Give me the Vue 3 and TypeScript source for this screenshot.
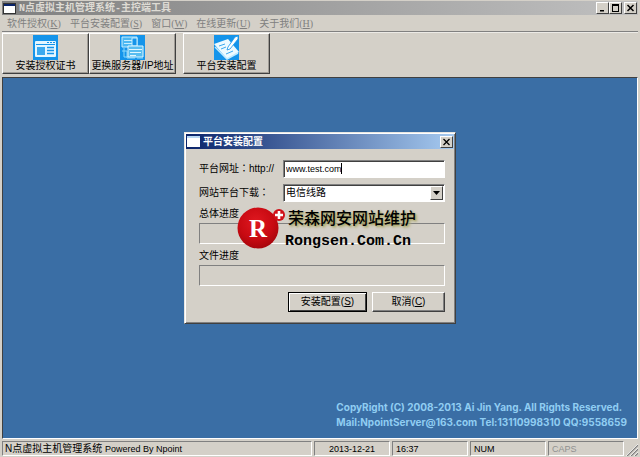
<script setup lang="ts">
import { ref } from 'vue'

interface MenuEntry {
  label: string
  key: string
}

const menus: MenuEntry[] = [
  { label: '软件授权', key: 'K' },
  { label: '平台安装配置', key: 'S' },
  { label: '窗口', key: 'W' },
  { label: '在线更新', key: 'U' },
  { label: '关于我们', key: 'H' },
]

const address = ref('www.test.com')
const line = ref('电信线路')
const focused = ref(false)
</script>

<template>
  <div class="window">
    <header class="title main-title">
      <svg class="app-icon" viewBox="0 0 13 11" aria-hidden="true">
        <rect x="0.5" y="0.5" width="12" height="10" fill="#fff" stroke="#333" />
        <rect x="1" y="1" width="11" height="2" fill="#0a246a" />
      </svg>
      <h1>N点虚拟主机管理系统-主控端工具</h1>
      <div class="captions">
        <button class="caption" aria-label="最小化">
          <svg viewBox="0 0 9 8"><path d="M2 6h4v1.5H2z" /></svg>
        </button>
        <button class="caption" aria-label="最大化">
          <svg viewBox="0 0 9 8"><path fill-rule="evenodd" d="M1 0h7v8H1zM2 2v5h5V2z" /></svg>
        </button>
        <button class="caption close" aria-label="关闭">
          <svg viewBox="0 0 9 8"><path d="M1.5 1l6 6M7.5 1l-6 6" stroke="#000" stroke-width="1.5" /></svg>
        </button>
      </div>
    </header>

    <nav class="menubar">
      <button v-for="m in menus" :key="m.key" class="menu">{{ m.label }}(<u>{{ m.key }}</u>)</button>
    </nav>

    <div class="toolbar">
      <button class="tool">
        <svg viewBox="0 0 25 25" aria-hidden="true">
          <rect width="25" height="25" fill="#1594ea" />
          <rect x="2" y="6" width="21" height="16" rx="1" fill="#e4f6ff" />
          <path d="M3 9.5h19" stroke="#1594ea" />
          <path d="M14 7.5h2M17 7.5h2M20 7.5h2" stroke="#1594ea" />
          <rect x="4" y="12" width="8" height="8" fill="#3ba9ef" />
          <path d="M14 12.5h7M14 15.5h7M14 18.5h7" stroke="#1594ea" stroke-width="1.5" />
        </svg>
        <span>安装授权证书</span>
      </button>
      <button class="tool">
        <svg viewBox="0 0 25 25" aria-hidden="true">
          <rect width="25" height="25" fill="#1594ea" />
          <path d="M2 2h15v10H2z" fill="#4db8f2" stroke="#c8efff" />
          <path d="M4 5.5h11M4 8.5h8" stroke="#c8efff" />
          <path d="M4 13v9h4M2 16h5v7h8" fill="none" stroke="#8ad9fb" />
          <path d="M12 3h5v8h-5z" fill="#1594ea" stroke="#c8efff" />
          <path d="M8 11h15v11H8z" fill="#58bdf0" stroke="#dff6ff" />
          <path d="M9 14.5h13M10 17.5h11M10 20.5h6" stroke="#dff6ff" />
          <path d="M17 23h6" stroke="#8ad9fb" />
        </svg>
        <span>更换服务器/IP地址</span>
      </button>
      <button class="tool apart">
        <svg viewBox="0 0 25 25" aria-hidden="true">
          <rect width="25" height="25" fill="#1594ea" />
          <path d="M0 9l14-5 11 13-12 7z" fill="#eefaff" />
          <path d="M1 12l12 12 11-6" fill="none" stroke="#c1eaff" stroke-width="1.5" />
          <path d="M5 11l6-2M7 14l5-2M12 19l7-3" stroke="#3ba9ef" />
          <path d="M24 1l-3 1-7 10-1 3 3-1 8-10z" fill="#fff" stroke="#1594ea" stroke-width="0.8" />
        </svg>
        <span>平台安装配置</span>
      </button>
    </div>

    <main class="client">
      <p class="copyright">
        CopyRight (C) 2008-2013 Ai Jin Yang. All Rights Reserved.<br />
        Mail:NpointServer@163.com Tel:13110998310 QQ:9558659
      </p>
    </main>

    <footer class="status">
      <span class="pane product">N点虚拟主机管理系统 <small>Powered By Npoint</small></span>
      <span class="pane date">2013-12-21</span>
      <span class="pane">16:37</span>
      <span class="pane">NUM</span>
      <span class="pane off">CAPS</span>
      <svg class="grip" viewBox="0 0 12 12" aria-hidden="true">
        <path d="M1 12L12 1M5 12l7-7M9 12l3-3" stroke="#808080" stroke-width="1.3" />
        <path d="M0 12L12 0M4 12l8-8M8 12l4-4" stroke="#fff" stroke-width="0.7" />
      </svg>
    </footer>

    <div class="layer">
      <section class="dialog" role="dialog" aria-labelledby="dialog-title">
        <header class="title dialog-title">
          <svg class="app-icon" viewBox="0 0 13 11" aria-hidden="true">
            <rect width="13" height="11" fill="#fff" />
            <rect width="13" height="2" fill="#b8d8f4" />
          </svg>
          <h2 id="dialog-title">平台安装配置</h2>
          <button class="caption" aria-label="关闭">
            <svg viewBox="0 0 9 8"><path d="M1.5 1l6 6M7.5 1l-6 6" stroke="#000" stroke-width="1.3" /></svg>
          </button>
        </header>

        <form class="form" @submit.prevent>
          <div class="row">
            <label for="address">平台网址<span class="colon">：</span>http://</label>
            <div class="field">
              <input id="address" v-model="address" type="text" @focus="focused = true" @blur="focused = false" />
              <i v-if="!focused" class="caret"></i>
            </div>
          </div>
          <div class="row">
            <label for="line">网站平台下载<span class="colon">：</span></label>
            <div class="field">
              <select id="line" v-model="line">
                <option>电信线路</option>
              </select>
              <span class="drop" aria-hidden="true">
                <svg viewBox="0 0 7 4"><path d="M0 0h7L3.5 4z" /></svg>
              </span>
            </div>
          </div>
          <div class="meter">
            <label for="total">总体进度</label>
            <progress id="total" value="0" max="100"></progress>
          </div>
          <div class="meter">
            <label for="file">文件进度</label>
            <progress id="file" value="0" max="100"></progress>
          </div>
          <div class="actions">
            <button class="push primary" type="submit">安装配置(<u>S</u>)</button>
            <button class="push" type="button">取消(<u>C</u>)</button>
          </div>
        </form>

        <div class="watermark">
          <svg viewBox="0 0 50 44" aria-hidden="true">
            <defs>
              <radialGradient id="ball" cx="45%" cy="35%" r="65%">
                <stop offset="0" stop-color="#e01820" />
                <stop offset="0.65" stop-color="#c80a12" />
                <stop offset="1" stop-color="#a8060c" />
              </radialGradient>
            </defs>
            <circle cx="21" cy="22" r="20.5" fill="url(#ball)" />
            <circle cx="42" cy="9" r="6" fill="#d01018" />
            <path d="M42 5v8M38 9h8" stroke="#fff" stroke-width="2.6" />
            <text x="21" y="31" text-anchor="middle" class="initial">R</text>
          </svg>
          <div class="brand">
            <strong class="brand-name">荣森网安网站维护</strong>
            <strong class="brand-site">Rongsen.Com.Cn</strong>
          </div>
        </div>
      </section>
    </div>
  </div>
</template>

<style>
body {
  margin: 0;
}
</style>

<style scoped>
* {
  box-sizing: border-box;
}
.window {
  position: relative;
  display: flex;
  flex-direction: column;
  min-height: 100vh;
  padding: 1px 2px;
  background: #d4d0c8;
  color: #000;
  font: 10px/12px "Liberation Sans", "Noto Sans CJK SC", sans-serif;
}
button,
input,
select {
  margin: 0;
  padding: 0;
  border-radius: 0;
  font: inherit;
  color: inherit;
}
.title {
  display: flex;
  align-items: center;
  gap: 3px;
  height: 14px;
  padding: 0 1px;
}
.main-title {
  background: linear-gradient(90deg, #808080, #c0c0c0);
  color: #dedbd4;
}
.dialog-title {
  height: 15px;
  background: linear-gradient(90deg, #0a246a, #a6caf0);
  color: #fff;
}
.title h1,
.title h2 {
  flex: 1;
  margin: 0;
  font-size: 10px;
  line-height: 14px;
  font-weight: bold;
  white-space: nowrap;
}
.title h1 {
  padding-top: 1px;
  font-family: "Liberation Mono", "Noto Sans CJK SC", monospace;
}
.app-icon {
  width: 13px;
  height: 11px;
}
.captions {
  display: flex;
}
.caption {
  display: grid;
  place-items: center;
  width: 13px;
  height: 12px;
  background: #d4d0c8;
  border: 1px solid;
  border-color: #fff #404040 #404040 #fff;
}
.caption svg {
  width: 9px;
  height: 8px;
}
.close {
  margin-left: 2px;
}
.menubar {
  display: flex;
  gap: 9px;
  height: 17px;
  padding: 1px 5px 0;
  border-bottom: 1px solid #808080;
}
.menu {
  border: 0;
  background: none;
  color: #808080;
  font-family: "Liberation Serif", "Noto Sans CJK SC", serif;
  white-space: nowrap;
}
.toolbar {
  display: flex;
  height: 45px;
  border-top: 1px solid #eceae6;
  align-items: flex-start;
}
.tool {
  display: flex;
  flex-direction: column;
  align-items: center;
  width: 87px;
  height: 41px;
  padding-top: 1px;
  background: #d4d0c8;
  border: 1px solid;
  border-color: #fff #404040 #404040 #fff;
  box-shadow: inset -1px -1px #a09c96;
  white-space: nowrap;
}
.tool svg {
  width: 25px;
  height: 25px;
}
.apart {
  margin-left: 7px;
}
.client {
  flex: 1;
  display: flex;
  justify-content: flex-end;
  align-items: flex-end;
  padding: 8px 10px;
  background: #3a6ea5;
  border: 1px solid;
  border-color: #404040 #fff #fff #404040;
}
.copyright {
  margin: 0;
  color: #90cdf2;
  font: bold 10px/15px Inter, sans-serif;
}
.status {
  display: grid;
  grid-template-columns: 1fr repeat(4, 76px) 12px;
  gap: 2px;
  padding-top: 2px;
}
.pane {
  height: 15px;
  padding: 0 3px;
  border: 1px solid;
  border-color: #808080 #fff #fff #808080;
  font-size: 9px;
  line-height: 14px;
  white-space: nowrap;
}
.product {
  padding: 0 2px;
  font-size: 10px;
}
.pane small {
  font-size: 9px;
}
.date {
  text-align: center;
}
.off {
  color: #909090;
}
.grip {
  align-self: end;
  width: 12px;
  height: 12px;
}
.layer {
  position: absolute;
  inset: 0;
  display: grid;
  place-items: center;
  padding-bottom: 1px;
  pointer-events: none;
}
.dialog {
  position: relative;
  width: 272px;
  padding: 1px;
  background: #d4d0c8;
  border: 1px solid;
  border-color: #e8e6e2 #404040 #404040 #e8e6e2;
  box-shadow: inset 1px 1px #fff, inset -1px -1px #808080;
  pointer-events: auto;
}
.form {
  display: flex;
  flex-direction: column;
  padding: 11px 9px 10px 13px;
}
.row {
  display: grid;
  grid-template-columns: 84px 1fr;
  align-items: center;
  margin-bottom: 6px;
  white-space: nowrap;
}
.colon {
  font-family: "Noto Sans CJK TC", sans-serif;
  line-height: 1;
}
.field {
  position: relative;
  display: flex;
}
.field input,
.field select {
  width: 100%;
  height: 18px;
  padding: 0 2px;
  background: #fff;
  border: 1px solid;
  border-color: #808080 #fff #fff #808080;
  box-shadow: inset 1px 1px #404040;
  outline: 0;
  appearance: none;
}
.field input {
  font-size: 9px;
}
.caret {
  position: absolute;
  left: 58px;
  top: 3px;
  width: 1px;
  height: 11px;
  background: #000;
}
.drop {
  position: absolute;
  right: 2px;
  top: 2px;
  display: grid;
  place-items: center;
  width: 13px;
  height: 14px;
  background: #d4d0c8;
  border: 1px solid;
  border-color: #fff #404040 #404040 #fff;
  pointer-events: none;
}
.drop svg {
  width: 7px;
  height: 4px;
}
.meter {
  display: flex;
  flex-direction: column;
  gap: 3px;
  margin-bottom: 6px;
}
progress {
  width: 100%;
  height: 21px;
  background: transparent;
  border: 1px solid;
  border-color: #808080 #fff #fff #808080;
  appearance: none;
}
progress::-webkit-progress-bar {
  background: transparent;
}
.actions {
  display: flex;
  justify-content: flex-end;
  gap: 5px;
}
.push {
  width: 73px;
  height: 20px;
  background: #d4d0c8;
  border: 1px solid;
  border-color: #fff #404040 #404040 #fff;
  box-shadow: inset -1px -1px #808080;
}
.primary {
  width: 79px;
  border-color: #000;
  box-shadow: inset 1px 1px #fff, inset -1px -1px #404040;
}
.watermark {
  position: absolute;
  left: 52px;
  top: 73px;
  display: flex;
  pointer-events: none;
}
.watermark svg {
  width: 50px;
  height: 44px;
}
.initial {
  font: bold 25px "Liberation Serif", serif;
  fill: #fff;
}
.brand {
  display: flex;
  flex-direction: column;
  gap: 4px;
  margin-left: -2px;
}
.brand-name {
  padding-left: 3px;
  font: 500 16px/22px "Noto Sans CJK SC", sans-serif;
  text-shadow: 1px 1px 2px #a8a460, 2px 2px 3px #b8b480;
}
.brand-site {
  font: bold 15px/20px "Liberation Mono", monospace;
}
</style>
